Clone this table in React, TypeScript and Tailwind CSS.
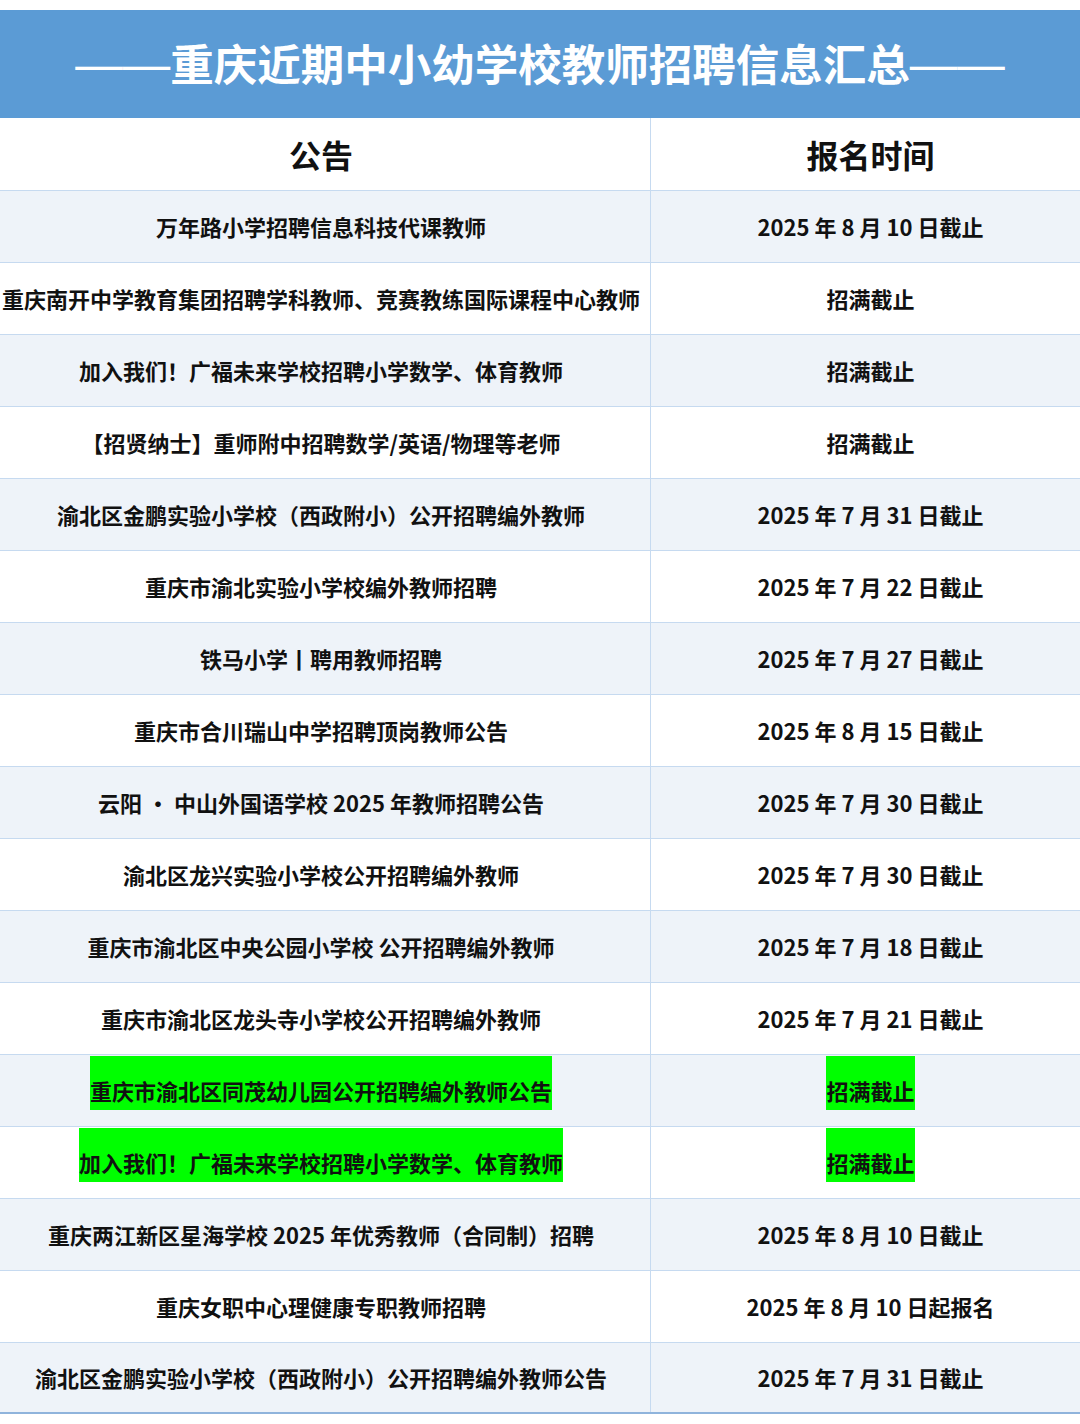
import React from "react";

type Row = { a: string; b: string; hl?: boolean };

const rows: Row[] = [
  { a: "万年路小学招聘信息科技代课教师", b: "2025 年 8 月 10 日截止" },
  { a: "重庆南开中学教育集团招聘学科教师、竞赛教练国际课程中心教师", b: "招满截止" },
  { a: "加入我们！广福未来学校招聘小学数学、体育教师", b: "招满截止" },
  { a: "【招贤纳士】重师附中招聘数学/英语/物理等老师", b: "招满截止" },
  { a: "渝北区金鹏实验小学校（西政附小）公开招聘编外教师", b: "2025 年 7 月 31 日截止" },
  { a: "重庆市渝北实验小学校编外教师招聘", b: "2025 年 7 月 22 日截止" },
  { a: "铁马小学丨聘用教师招聘", b: "2025 年 7 月 27 日截止" },
  { a: "重庆市合川瑞山中学招聘顶岗教师公告", b: "2025 年 8 月 15 日截止" },
  { a: "云阳 • 中山外国语学校 2025 年教师招聘公告", b: "2025 年 7 月 30 日截止" },
  { a: "渝北区龙兴实验小学校公开招聘编外教师", b: "2025 年 7 月 30 日截止" },
  { a: "重庆市渝北区中央公园小学校 公开招聘编外教师", b: "2025 年 7 月 18 日截止" },
  { a: "重庆市渝北区龙头寺小学校公开招聘编外教师", b: "2025 年 7 月 21 日截止" },
  { a: "重庆市渝北区同茂幼儿园公开招聘编外教师公告", b: "招满截止", hl: true },
  { a: "加入我们！广福未来学校招聘小学数学、体育教师", b: "招满截止", hl: true },
  { a: "重庆两江新区星海学校 2025 年优秀教师（合同制）招聘", b: "2025 年 8 月 10 日截止" },
  { a: "重庆女职中心理健康专职教师招聘", b: "2025 年 8 月 10 日起报名" },
  { a: "渝北区金鹏实验小学校（西政附小）公开招聘编外教师公告", b: "2025 年 7 月 31 日截止" },
];

function Cell({ text, hl, left }: { text: string; hl?: boolean; left?: boolean }) {
  return (
    <div
      className={
        "flex justify-center h-full " +
        (left ? "" : "border-l border-[#c6daf0] ") +
        (hl ? "items-start" : "items-center")
      }
    >
      {hl ? (
        <div className="mt-px h-[54px] bg-[#00ff00] flex items-end pb-[4px]">
          <span className="leading-[32px] whitespace-nowrap">{text}</span>
        </div>
      ) : (
        <span className="whitespace-nowrap">{text}</span>
      )}
    </div>
  );
}

export default function App() {
  return (
    <div
      className="w-[1080px] h-[1424px] bg-white overflow-hidden text-[#111111]"
      style={{ fontFamily: '"Noto Sans CJK SC", "Noto Sans", sans-serif' }}
    >
      <div className="h-[10px]" />
      <div className="h-[108px] bg-[#5b9bd5] flex items-center justify-center">
        <h1 className="text-white font-bold text-[43.5px] leading-none whitespace-nowrap -mt-[2px] flex items-center">
          <span
            className="inline-block w-[95px] text-[47.5px] font-normal mt-[4px]"
            style={{ fontFamily: '"Liberation Sans", sans-serif' }}
          >
            ——
          </span>
          <span>重庆近期中小幼学校教师招聘信息汇总</span>
          <span
            className="inline-block w-[95px] text-[47.5px] font-normal mt-[4px]"
            style={{ fontFamily: '"Liberation Sans", sans-serif' }}
          >
            ——
          </span>
        </h1>
      </div>
      <div className="w-[1080px] overflow-hidden">
        <div className="w-[1098px] -ml-2 font-bold">
          <div className="grid grid-cols-[658px_440px] h-[72px] bg-white text-[32px]">
            <Cell text="公告" left />
            <Cell text="报名时间" />
          </div>
          {rows.map((r, i) => (
            <div
              key={i}
              className={
                "grid grid-cols-[658px_440px] h-[72px] border-t border-[#c6daf0] text-[22px] " +
                (i % 2 === 0 ? "bg-[#eef3f9] " : "bg-white ") +
                (i === rows.length - 1 ? "border-b-2 border-b-[#8fb4dc]" : "")
              }
            >
              <Cell text={r.a} hl={r.hl} left />
              <Cell text={r.b} hl={r.hl} />
            </div>
          ))}
        </div>
      </div>
    </div>
  );
}
